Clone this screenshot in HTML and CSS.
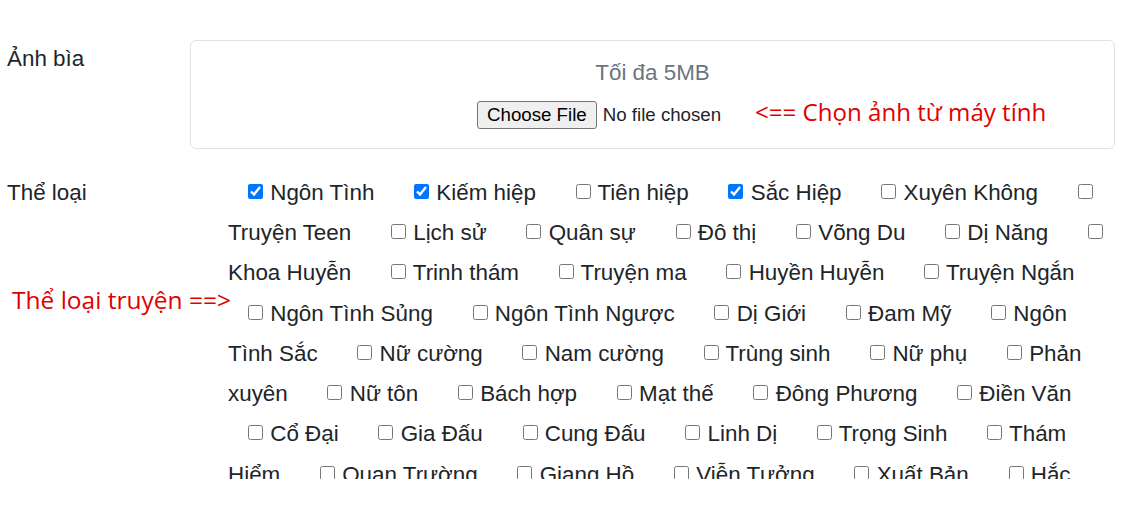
FILE: index.html
```html
<!DOCTYPE html>
<html lang="vi">
<head>
<meta charset="utf-8">
<title>Đăng truyện</title>
<link rel="stylesheet" href="styles.css">
</head>
<body>
<form class="form">
  <div class="row row-cover">
    <label class="lbl">Ảnh bìa</label>
    <div class="upload">
      <div class="hint">Tối đa 5MB</div>
      <div class="pick">
        <input type="file" class="file">
        <span class="note">&lt;== Chọn ảnh từ máy tính</span>
      </div>
    </div>
  </div>
  <div class="row row-genre">
    <div class="lbl">
      <div>Thể loại</div>
      <div class="arrow">Thể loại truyện ==&gt;</div>
    </div>
    <div class="genres">
      <label class="g"><input type="checkbox" checked> Ngôn Tình</label>
      <label class="g"><input type="checkbox" checked> Kiếm hiệp</label>
      <label class="g"><input type="checkbox"> Tiên hiệp</label>
      <label class="g"><input type="checkbox" checked> Sắc Hiệp</label>
      <label class="g"><input type="checkbox"> Xuyên Không</label>
      <label class="g"><input type="checkbox"> Truyện Teen</label>
      <label class="g"><input type="checkbox"> Lịch sử</label>
      <label class="g"><input type="checkbox"> Quân sự</label>
      <label class="g"><input type="checkbox"> Đô thị</label>
      <label class="g"><input type="checkbox"> Võng Du</label>
      <label class="g"><input type="checkbox"> Dị Năng</label>
      <label class="g"><input type="checkbox"> Khoa Huyễn</label>
      <label class="g"><input type="checkbox"> Trinh thám</label>
      <label class="g"><input type="checkbox"> Truyện ma</label>
      <label class="g"><input type="checkbox"> Huyền Huyễn</label>
      <label class="g"><input type="checkbox"> Truyện Ngắn</label>
      <label class="g"><input type="checkbox"> Ngôn Tình Sủng</label>
      <label class="g"><input type="checkbox"> Ngôn Tình Ngược</label>
      <label class="g"><input type="checkbox"> Dị Giới</label>
      <label class="g"><input type="checkbox"> Đam Mỹ</label>
      <label class="g"><input type="checkbox"> Ngôn Tình Sắc</label>
      <label class="g"><input type="checkbox"> Nữ cường</label>
      <label class="g"><input type="checkbox"> Nam cường</label>
      <label class="g"><input type="checkbox"> Trùng sinh</label>
      <label class="g"><input type="checkbox"> Nữ phụ</label>
      <label class="g"><input type="checkbox"> Phản xuyên</label>
      <label class="g"><input type="checkbox"> Nữ tôn</label>
      <label class="g"><input type="checkbox"> Bách hợp</label>
      <label class="g"><input type="checkbox"> Mạt thế</label>
      <label class="g"><input type="checkbox"> Đông Phương</label>
      <label class="g"><input type="checkbox"> Điền Văn</label>
      <label class="g"><input type="checkbox"> Cổ Đại</label>
      <label class="g"><input type="checkbox"> Gia Đấu</label>
      <label class="g"><input type="checkbox"> Cung Đấu</label>
      <label class="g"><input type="checkbox"> Linh Dị</label>
      <label class="g"><input type="checkbox"> Trọng Sinh</label>
      <label class="g"><input type="checkbox"> Thám Hiểm</label>
      <label class="g"><input type="checkbox"> Quan Trường</label>
      <label class="g"><input type="checkbox"> Giang Hồ</label>
      <label class="g"><input type="checkbox"> Viễn Tưởng</label>
      <label class="g"><input type="checkbox"> Xuất Bản</label>
      <label class="g"><input type="checkbox"> Hắc Bang</label>
      <label class="g"><input type="checkbox"> Hệ Thống</label>
      <label class="g"><input type="checkbox"> Khác</label>
    </div>
  </div>
</form>
</body>
</html>
```

FILE: styles.css
```css
html, body {
  margin: 0;
  padding: 0;
  background: #fff;
}

body {
  font-family: "Liberation Sans", Arial, sans-serif;
  font-size: 22.4px;
  line-height: 1.5;
  color: #212529;
}

.form {
  width: 1115px;
  padding-top: 40px;
}

.row {
  display: grid;
  grid-template-columns: 190px 1fr;
}

.lbl {
  padding-left: 7px;
  padding-top: 2px;
}

.upload {
  border: 1px solid #dee2e6;
  border-radius: 6px;
  padding: 15px 0 16px;
}

.hint {
  text-align: center;
  color: #6c757d;
  margin-bottom: 8px;
}

.pick {
  display: flex;
  align-items: center;
  height: 34px;
  padding-left: 286px;
}

.file {
  font-family: "Liberation Sans", Arial, sans-serif;
  font-size: 18.7px;
  color: #212529;
  width: 245px;
}

.file::file-selector-button {
  font-family: "Liberation Sans", Arial, sans-serif;
  font-size: 18.7px;
  color: #000;
  background: #efefef;
  border: 1px solid #767676;
  border-radius: 3px;
  padding: 2px 9px;
  margin-right: 6px;
}

.note {
  margin-left: 33px;
  margin-bottom: 4px;
  color: #e00000;
  font-family: "Open Sans", "Noto Sans", sans-serif;
  font-size: 24.1px;
  line-height: 1.2;
}

.row-genre {
  margin-top: 24px;
}

.row-genre .lbl {
  padding-top: 3px;
}

.arrow {
  margin-top: 76px;
  margin-left: 5px;
  color: #e00000;
  font-family: "Open Sans", "Noto Sans", sans-serif;
  font-size: 24.5px;
  line-height: 1.2;
  white-space: nowrap;
}

.genres {
  margin-left: 38px;
  height: 306px;
  overflow: hidden;
  line-height: 40.3px;
}

.g {
  padding-right: 13.5px;
}

.g input {
  width: 15px;
  height: 15px;
  margin: 0 1px 0 20px;
  vertical-align: 1px;
  accent-color: #0075ff;
}
```
